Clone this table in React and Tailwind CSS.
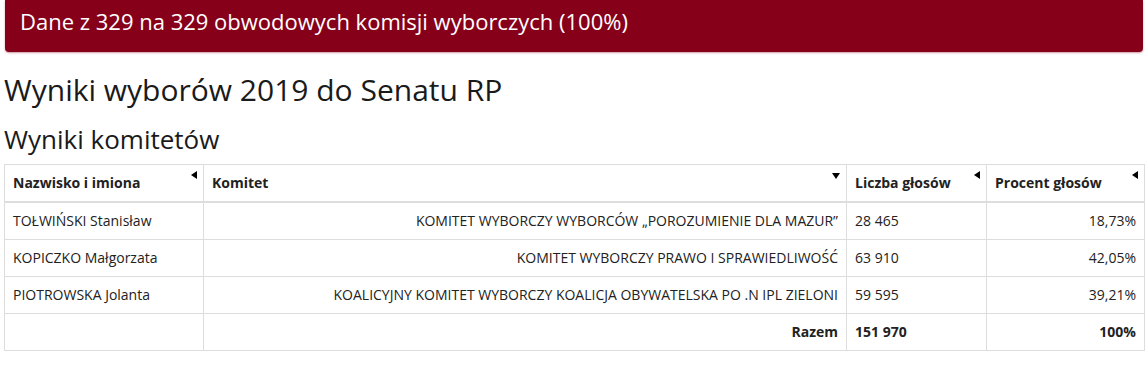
const rows = [
  { name: 'TOŁWIŃSKI Stanisław', komitet: 'KOMITET WYBORCZY WYBORCÓW „POROZUMIENIE DLA MAZUR”', glosy: '28 465', procent: '18,73%' },
  { name: 'KOPICZKO Małgorzata', komitet: 'KOMITET WYBORCZY PRAWO I SPRAWIEDLIWOŚĆ', glosy: '63 910', procent: '42,05%' },
  { name: 'PIOTROWSKA Jolanta', komitet: 'KOALICYJNY KOMITET WYBORCZY KOALICJA OBYWATELSKA PO .N IPL ZIELONI', glosy: '59 595', procent: '39,21%' },
];

function SortLeft() {
  return <span className="absolute right-[6px] top-[6px] w-0 h-0 border-y-[4px] border-y-transparent border-r-[6px] border-r-black" />;
}

function SortDown() {
  return <span className="absolute right-[6px] top-[8px] w-0 h-0 border-x-[4px] border-x-transparent border-t-[6px] border-t-black" />;
}

export default function App() {
  return (
    <div className="px-[4px] text-[#222] font-['Open_Sans',sans-serif]">
      <div className="mx-px bg-[#86001a] rounded-b-[4px] shadow-[0_1px_2px_rgba(134,0,26,0.4)] h-[52px] pt-[6px] px-[15px] text-white text-[22px] leading-[31px]">
        Dane z 329 na 329 obwodowych komisji wyborczych (100%)
      </div>

      <h1 className="text-[30px] leading-[1.1] mt-[21px] text-[#1a1a1a]">Wyniki wyborów 2019 do Senatu RP</h1>
      <h2 className="text-[26px] leading-[1.1] mt-[19px] mb-[10px] text-[#1a1a1a]">Wyniki komitetów</h2>

      <table className="w-[1141px] border-collapse border border-[#ddd] text-[14px] leading-[20px]">
        <thead>
          <tr className="font-bold text-left">
            <th className="relative w-[199px] p-2 border border-[#ddd] border-b-2">Nazwisko i imiona<SortLeft /></th>
            <th className="relative w-[643px] p-2 border border-[#ddd] border-b-2">Komitet<SortDown /></th>
            <th className="relative w-[140px] p-2 border border-[#ddd] border-b-2">Liczba głosów<SortLeft /></th>
            <th className="relative p-2 border border-[#ddd] border-b-2">Procent głosów<SortLeft /></th>
          </tr>
        </thead>
        <tbody>
          {rows.map((r) => (
            <tr key={r.name}>
              <td className="p-2 border border-[#ddd]">{r.name}</td>
              <td className="p-2 border border-[#ddd] text-right">{r.komitet}</td>
              <td className="p-2 border border-[#ddd]">{r.glosy}</td>
              <td className="p-2 border border-[#ddd] text-right">{r.procent}</td>
            </tr>
          ))}
          <tr className="font-bold">
            <td className="p-2 border border-[#ddd]"></td>
            <td className="p-2 border border-[#ddd] text-right">Razem</td>
            <td className="p-2 border border-[#ddd]">151 970</td>
            <td className="p-2 border border-[#ddd] text-right">100%</td>
          </tr>
        </tbody>
      </table>
    </div>
  );
}
